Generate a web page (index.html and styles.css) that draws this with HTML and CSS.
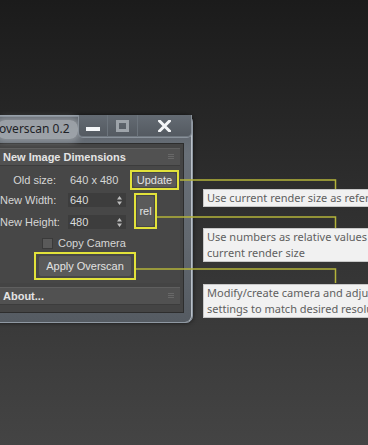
FILE: index.html
```html
<!DOCTYPE html>
<html lang="en">
<head>
    <meta charset="UTF-8">
    <meta name="viewport" content="width=device-width, initial-scale=1.0">
    <title>Overscan 0.2</title>
    <link rel="stylesheet" href="styles.css">
</head>
<body>
    <div class="scene">
        <div class="window">
            <div class="titlebar">
                <span class="title">overscan 0.2</span>
                <div class="caption">
                    <span class="cap-btn cap-min"><svg width="14" height="4" viewBox="0 0 14 4"><rect x="0" y="0" width="14" height="4" fill="#f4f6f8"/></svg></span>
                    <span class="cap-btn cap-max"><svg width="13" height="12" viewBox="0 0 13 12"><rect x="1.5" y="1.5" width="10" height="9" fill="none" stroke="#9ea4aa" stroke-width="3"/></svg></span>
                    <span class="cap-btn cap-close"><svg width="13" height="12" viewBox="0 0 13 12"><path d="M1.5 1 L11.5 11 M11.5 1 L1.5 11" stroke="#f4f6f8" stroke-width="3" stroke-linecap="square"/></svg></span>
                </div>
            </div>

            <div class="client">
                <!-- main rollout -->
                <div class="rollout">
                    <div class="rollout-head">
                        <span>New Image Dimensions</span>
                        <span class="grip"></span>
                    </div>
                    <div class="rollout-body">
                        <div class="row row-old">
                            <span class="label">Old size:</span>
                            <span class="value">640 x 480</span>
                            <span class="hl hl-update"><span class="btn">Update</span></span>
                        </div>
                        <div class="dims">
                            <div class="fields">
                                <div class="row">
                                    <span class="label">New Width:</span>
                                    <span class="spinner">640<svg class="arrows" width="5" height="9" viewBox="0 0 5 9"><path d="M2.5 0 L5 3.5 L0 3.5 Z M2.5 9 L5 5.5 L0 5.5 Z" fill="#bdbdbd"/></svg></span>
                                </div>
                                <div class="row">
                                    <span class="label">New Height:</span>
                                    <span class="spinner">480<svg class="arrows" width="5" height="9" viewBox="0 0 5 9"><path d="M2.5 0 L5 3.5 L0 3.5 Z M2.5 9 L5 5.5 L0 5.5 Z" fill="#bdbdbd"/></svg></span>
                                </div>
                            </div>
                            <span class="hl hl-rel"><span class="btn">rel</span></span>
                        </div>
                        <div class="check-row">
                            <span class="checkbox"></span>
                            <span>Copy Camera</span>
                        </div>
                        <span class="hl hl-apply"><span class="btn">Apply Overscan</span></span>
                    </div>
                </div>

                <div class="rollout">
                    <div class="rollout-head">
                        <span>About...</span>
                        <span class="grip"></span>
                    </div>
                </div>
            </div>
        </div>

        <div class="notes">
            <div class="note note-update">Use current render size as reference</div>
            <div class="note note-rel">Use numbers as relative values to the<br>current render size</div>
            <div class="note note-apply">Modify/create camera and adjust render<br>settings to match desired resolution</div>
        </div>

        <!-- leader lines from the highlighted buttons to the notes -->
        <svg class="leaders" width="368" height="445" viewBox="0 0 368 445">
            <polyline points="180,180 335.5,180 335.5,189" />
            <polyline points="157,217 335.5,217 335.5,228" />
            <polyline points="136,269 335.5,269 335.5,283" />
        </svg>
    </div>
</body>
</html>
```

FILE: styles.css
```css
html, body {
    margin: 0;
    height: 100%;
}

body {
    background: linear-gradient(to bottom, #1b1b1b 0%, #262626 25%, #333 55%, #444 100%);
    font-family: "Liberation Sans", Arial, sans-serif;
    overflow: hidden;
}

.scene {
    position: relative;
    display: flex;
    align-items: flex-start;
    padding-top: 115px;
    height: 330px;
}

/* Window frame */
.window {
    flex-shrink: 0;
    margin-left: -10px;
    width: 185px;
    padding: 0 8px 9px 8px;
    border: 1px solid #8f98a2;
    border-radius: 0 7px 7px 0;
    background: linear-gradient(to bottom, #5a6068 0%, #697078 18%, #62686f 60%, #555b62 100%);
    box-shadow: inset -1px 0 0 #b9c0c8, inset 0 1px 0 #7d8690, 0 0 4px rgba(0, 0, 0, 0.6);
}

.titlebar {
    display: flex;
    align-items: flex-start;
    height: 27px;
}

.title {
    flex-shrink: 0;
    margin-top: 4px;
    margin-left: -2px;
    padding: 1px 8px 2px 2px;
    font-family: "Noto Sans", sans-serif;
    font-size: 12px;
    line-height: 16px;
    white-space: nowrap;
    color: #1e2226;
    background: rgba(195, 200, 205, 0.6);
    border-radius: 8px;
    box-shadow: 0 0 6px 3px rgba(195, 200, 205, 0.45);
}

.caption {
    display: flex;
    margin-left: auto;
    margin-right: -6px;
    margin-top: -1px;
    height: 22px;
    border: 1px solid #8a929b;
    border-top: none;
    border-radius: 0 0 5px 5px;
    background: linear-gradient(to bottom, #646b73, #535960);
    box-shadow: inset 0 -1px 0 #707880;
}

.cap-btn {
    display: flex;
    align-items: center;
    justify-content: center;
    height: 22px;
    border-right: 1px solid #6c747c;
}

.cap-min {
    width: 29px;
    padding-top: 6px;
    box-sizing: border-box;
}

.cap-max {
    width: 29px;
}

.cap-close {
    width: 53px;
    border-right: none;
}

/* Client area */
.client {
    height: 170px;
    padding: 4px 3px 0 0;
    background: #444;
    border: 1px solid #2d2d2d;
    box-sizing: border-box;
    color: #d6d6d6;
    font-size: 11px;
}

.rollout {
    margin-bottom: 4px;
}

.rollout-head {
    display: flex;
    align-items: center;
    justify-content: space-between;
    height: 18px;
    padding: 0 6px 0 3px;
    background: #515151;
    border-top: 1px solid #5f5f5f;
    border-bottom: 1px solid #3c3c3c;
    box-sizing: border-box;
    font-weight: bold;
    color: #e4e4e4;
}

.grip {
    width: 6px;
    height: 6px;
    background: repeating-linear-gradient(to bottom, #686868 0 1px, transparent 1px 2px);
}

.rollout-body {
    padding: 4px 0 3px 0;
    background: #474747;
}

.row {
    display: flex;
    align-items: center;
}

.label {
    width: 56px;
    text-align: right;
    white-space: nowrap;
}

.row-old {
    height: 20px;
}

.value {
    width: 60px;
    margin-left: 14px;
}

.hl {
    display: inline-flex;
    border: 2px solid #e2e23a;
    padding: 1px;
    box-sizing: border-box;
}

.btn {
    display: flex;
    align-items: center;
    justify-content: center;
    flex: 1;
    background: #5a5a5a;
    color: #e2e2e2;
    border-radius: 2px;
}

.hl-update {
    width: 49px;
    height: 20px;
}

.dims {
    display: flex;
    margin-top: 3px;
}

.fields {
    display: flex;
    flex-direction: column;
    gap: 8px;
}

.fields .row {
    height: 14px;
}

.spinner {
    display: flex;
    align-items: center;
    justify-content: space-between;
    width: 58px;
    height: 14px;
    margin-left: 12px;
    padding: 0 4px 0 2px;
    box-sizing: border-box;
    background: #3d3d3d;
    color: #dcdcdc;
}

.hl-rel {
    width: 23px;
    height: 36px;
    margin-left: 8px;
}

.check-row {
    display: flex;
    align-items: center;
    gap: 5px;
    height: 16px;
    margin-top: 6px;
    padding-left: 42px;
}

.checkbox {
    width: 9px;
    height: 9px;
    background: #5a5a5a;
    border: 1px solid #3a3a3a;
}

.hl-apply {
    width: 102px;
    height: 28px;
    margin: 1px 0 0 34px;
    padding: 2px 3px;
}

/* Callout notes */
.notes {
    display: flex;
    flex-direction: column;
    margin-left: 10px;
    padding-top: 74px;
    font-family: "Noto Sans", sans-serif;
    font-size: 11px;
    color: #5f5f5f;
    white-space: nowrap;
}

.note {
    width: 240px;
    padding: 0 3px;
    background: #f1f1f1;
    border: 1px solid #c8c8c8;
    line-height: 16px;
}

.note-rel {
    margin-top: 21px;
}

.note-apply {
    margin-top: 22px;
}

.leaders {
    position: absolute;
    top: 0;
    left: 0;
    pointer-events: none;
}

.leaders polyline {
    fill: none;
    stroke: #b4b43a;
    stroke-width: 1.5;
}
```
